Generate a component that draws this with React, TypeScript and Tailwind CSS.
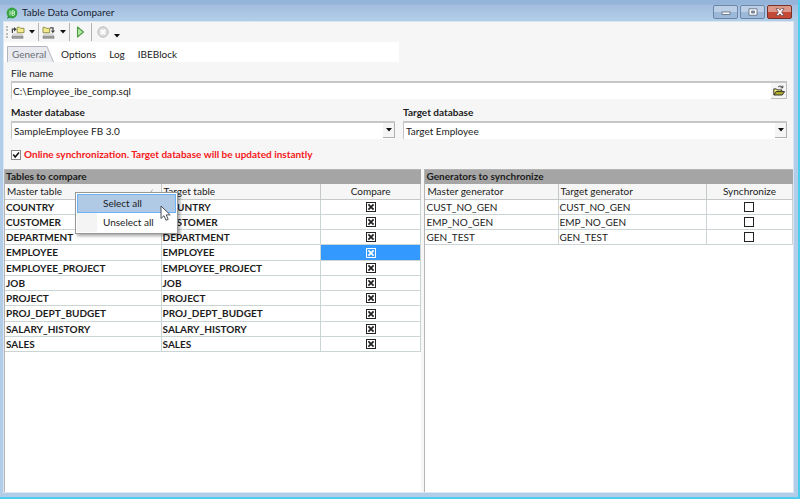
import { useState } from "react";
import type { ReactNode } from "react";
import clsx from "clsx";

const tables = [
    "COUNTRY",
    "CUSTOMER",
    "DEPARTMENT",
    "EMPLOYEE",
    "EMPLOYEE_PROJECT",
    "JOB",
    "PROJECT",
    "PROJ_DEPT_BUDGET",
    "SALARY_HISTORY",
    "SALES",
];

const generators = ["CUST_NO_GEN", "EMP_NO_GEN", "GEN_TEST"];

const tabs = ["Options", "Log", "IBEBlock"];

const CaretDown = ({ className }: { className?: string }) => (
    <svg viewBox="0 0 6 4" className={clsx("w-[6px] h-[4px]", className)} fill="#111" aria-hidden="true">
        <path d="M0 0h6L3 3.5z" />
    </svg>
);

const AppLogo = () => (
    <svg viewBox="0 0 12 12" className="size-3" aria-hidden="true">
        <circle cx="6" cy="6" r="5.4" fill="#35a53f" />
        <path d="M2 9 1 12l3-1.4z" fill="#2b8a35" />
        <path d="M4 3.6v4.8M6 3.8h1.6a1 1 0 0 1 0 2.2H6.2h1.6a1.2 1.2 0 0 1 0 2.3H6z" fill="none" stroke="#d4f5d8" strokeWidth="1" />
    </svg>
);

// disk drive with a folder; `out` flips the arrow so it points down to the drive
const DriveIcon = ({ out = false }: { out?: boolean }) => (
    <svg viewBox="0 0 14 13" className="w-[14px] h-[13px]" aria-hidden="true">
        <path d="M2.5 8h8l1.5 2H1z" fill="#ececec" stroke="#b5b5b5" strokeWidth="0.6" />
        <path d="M1 10.3h11v2H1z" fill="#a0a0a0" stroke="#777" strokeWidth="0.6" />
        {out ? (
            <>
                <path d="M1 1.3h2.2l.8 1h3.6v4.4H1z" fill="#f4ec8c" stroke="#8d8840" strokeWidth="0.9" />
                <path d="M8 1.8h3v3" fill="none" stroke="#444" strokeWidth="1.2" />
                <path d="M8.8 4.6H13l-2.1 2.6z" fill="#444" />
            </>
        ) : (
            <>
                <path d="M6.2 1.3h2.4l.8 1H13v4.4H6.2z" fill="#f4ec8c" stroke="#8d8840" strokeWidth="0.9" />
                <path d="M1.4 7V3.2h2" fill="none" stroke="#444" strokeWidth="1.2" />
                <path d="M3 .9l2.7 2.3L3 5.5z" fill="#444" />
            </>
        )}
    </svg>
);

const FolderOpenIcon = () => (
    <svg viewBox="0 0 12 11" className="w-3 h-[11px]" aria-hidden="true">
        <path d="M5 2.2C6 .8 8 .6 9.4 2.2M9.8.6v2.2H7.6" fill="none" stroke="#333" strokeWidth="0.9" />
        <path d="M.8 9.8V3.9h2.6l.8 1h4.6v1.6" fill="#f3ec7a" stroke="#222" strokeWidth="0.9" />
        <path d="M.9 10 3 6.6h8.6L9.2 10z" fill="#b5b130" stroke="#222" strokeWidth="0.9" />
    </svg>
);

const TitleBar = () => (
    <header className="flex h-[21px] shrink-0 items-start justify-between bg-linear-to-b from-[#94b4d9] from-20% via-[#a4bddf] via-25% to-[#b0cde8] to-90% px-[6px]">
        <div className="flex items-center gap-1 pt-[5px]">
            <AppLogo />
            <h1 className="leading-[15px] text-[#1a2433]">Table Data Comparer</h1>
        </div>
        <div className="flex gap-[2px] pt-[5px]">
            <button aria-label="Minimize" className="flex h-[14px] w-[25px] items-center justify-center rounded-[2px] border border-[#6b86a8] bg-linear-to-b from-[#bccfe6] from-50% to-[#9db9da] to-50%">
                <svg viewBox="0 0 10 8" className="h-2 w-2.5"><rect x="1" y="4" width="8" height="2.5" fill="#fff" stroke="#596678" strokeWidth="0.8" /></svg>
            </button>
            <button aria-label="Maximize" className="flex h-[14px] w-[25px] items-center justify-center rounded-[2px] border border-[#6b86a8] bg-linear-to-b from-[#bccfe6] from-50% to-[#9db9da] to-50%">
                <svg viewBox="0 0 10 8" className="h-2 w-2.5"><path d="M1 .8h8v6.4H1z" fill="#fff" stroke="#596678" strokeWidth="0.8" /><path d="M3.6 3h2.8v2H3.6z" fill="#8ea7c6" stroke="#596678" strokeWidth="0.8" /></svg>
            </button>
            <button aria-label="Close" className="flex h-[14px] w-[25px] items-center justify-center rounded-[2px] border border-[#7a3029] bg-linear-to-b from-[#dd9788] from-50% to-[#c44a36] to-50%">
                <svg viewBox="0 0 10 8" className="h-2 w-2.5"><path d="M1 .6h2.6L5 2.2 6.4.6H9L6.6 4 9 7.4H6.4L5 5.8 3.6 7.4H1L3.4 4z" fill="#fff" stroke="#6a4a4a" strokeWidth="0.8" /></svg>
            </button>
        </div>
    </header>
);

const Divider = () => <span className="h-[18px] w-px bg-[#b4b4b4]" />;

const Toolbar = () => (
    <div className="flex h-5 items-center pl-[2px]">
        <span className="h-3 border-l-2 border-dotted border-[#bdbdbd]" />
        <button aria-label="Load configuration" className="flex items-center gap-1 px-[3px]">
            <DriveIcon />
            <CaretDown />
        </button>
        <Divider />
        <button aria-label="Save configuration" className="flex items-center gap-1 pr-[3px] pl-[3px]">
            <DriveIcon out />
            <CaretDown />
        </button>
        <Divider />
        <button aria-label="Run" className="flex w-[21px] justify-center">
            <svg viewBox="0 0 9 12" className="h-3 w-[9px]"><path d="M1.5 1v10l6-5z" fill="#b4e8a0" stroke="#4f9a45" strokeWidth="1.1" strokeLinejoin="round" /></svg>
        </button>
        <Divider />
        <button aria-label="Stop" disabled className="flex w-[21px] justify-center">
            <svg viewBox="0 0 12 12" className="size-3"><circle cx="6" cy="6" r="5.2" fill="#dedede" stroke="#bcbcbc" /><path d="m4 4 4 4m0-4-4 4" stroke="#fff" strokeWidth="2" /></svg>
        </button>
        <button aria-label="More" className="px-px pt-2">
            <CaretDown />
        </button>
    </div>
);

const TabStrip = () => (
    <nav role="tablist" className="flex h-5 w-1/2 items-end bg-white pl-[3px]">
        <button role="tab" aria-selected="true" className="relative h-4 w-[47px] text-left text-[#6c7076]">
            <svg viewBox="0 0 47 16" preserveAspectRatio="none" className="absolute inset-0 size-full" aria-hidden="true">
                <path d="M.5 16V.5h39.5L46.5 16" fill="#e9ebf1" stroke="#b3b6bc" />
            </svg>
            <span className="relative pl-[5px]">General</span>
        </button>
        <div className="flex h-4 items-center gap-[13px] pl-[7px]">
            {tabs.map((tab) => (
                <button key={tab} role="tab" aria-selected="false">{tab}</button>
            ))}
        </div>
    </nav>
);

const DatabaseSelect = ({ id, label, value }: { id: string; label: string; value: string }) => (
    <div className="flex min-w-0 flex-1 flex-col gap-[2px]">
        <label htmlFor={id} className="font-bold">{label}</label>
        <div className="relative">
            <select id={id} className="block h-[18px] w-full appearance-none border-t-2 border-l border-[#c6c6c6] bg-white pl-[2px] outline-none">
                <option>{value}</option>
            </select>
            <span className="pointer-events-none absolute top-[2px] right-0 flex h-[15px] w-3 items-center justify-center border-r border-b border-[#b0b0b0] bg-[#f5f5f5]">
                <CaretDown />
            </span>
        </div>
    </div>
);

const CellCheck = ({ label, checked, selected = false }: { label: string; checked: boolean; selected?: boolean }) => {
    const [on, setOn] = useState(checked);
    return (
        <label className={clsx("relative mx-auto block size-[10px]", selected ? "text-white" : "text-[#222]")}>
            <input
                type="checkbox"
                aria-label={label}
                checked={on}
                onChange={() => setOn(!on)}
                className="block size-[10px] appearance-none border border-current"
            />
            {on && (
                <svg viewBox="0 0 10 10" className="pointer-events-none absolute inset-0 size-full" aria-hidden="true">
                    <path d="m2.4 2.4 5.2 5.2m0-5.2L2.4 7.6" stroke="currentColor" strokeWidth="1.8" />
                </svg>
            )}
        </label>
    );
};

type GridProps = {
    title: string;
    columns: [string, string, string];
    widths: [string, string, string];
    rows: string[];
    checked?: boolean;
    selected?: string;
    bold?: boolean;
    sorted?: boolean;
    className?: string;
    children?: ReactNode;
};

const GridPanel = ({ title, columns, widths, rows, checked = false, selected, bold, sorted, className, children }: GridProps) => (
    <section className={clsx("relative min-w-0 border-t border-l border-[#b5b5b5] bg-white", className)}>
        <h2 className="h-[14px] bg-[#a5a5a5] pl-px leading-[13px] font-bold">{title}</h2>
        <table className="w-full table-fixed border-separate border-spacing-0">
            <thead className="bg-[#f6f6f6]">
                <tr className="h-4">
                    {columns.map((column, i) => (
                        <th
                            key={column}
                            className={clsx("border-r border-b border-[#c4c8c8] p-0 font-normal", widths[i], i < 2 ? "pl-[2px] text-left" : "text-center")}
                        >
                            <span className="flex items-center">
                                <span className={clsx(i === 2 && "w-full")}>{column}</span>
                                {sorted && i === 0 && (
                                    <svg viewBox="0 0 7 6" className="mr-[5px] ml-auto h-1.5 w-[7px]" aria-hidden="true"><path d="M.5 5.5 3.5.5" stroke="#aaa" /></svg>
                                )}
                            </span>
                        </th>
                    ))}
                </tr>
            </thead>
            <tbody>
                {rows.map((row) => (
                    <tr key={row} className="h-[15px] nth-[4n]:h-4">
                        <td className={clsx("border-r border-b border-[#ccd5d5] p-0 pl-px", bold && "font-bold")}>{row}</td>
                        <td className={clsx("border-r border-b border-[#ccd5d5] p-0 pl-px", bold && "font-bold")}>{row}</td>
                        <td className={clsx("border-r border-b border-[#ccd5d5] p-0", row === selected && "bg-[#3399ff]")}>
                            <CellCheck label={`${columns[2]} ${row}`} checked={checked} selected={row === selected} />
                        </td>
                    </tr>
                ))}
            </tbody>
        </table>
        {children}
    </section>
);

const ContextMenu = () => (
    <div role="menu" className="absolute top-[22px] left-[70px] w-[103px] border border-[#979797] bg-white p-px shadow-[2px_2px_3px_rgba(0,0,0,0.35)]">
        <button role="menuitem" className="block h-[19px] w-full border border-[#6bb3f5] bg-[#b0cae6] pl-[25px] text-left">Select all</button>
        <button role="menuitem" className="block h-[19px] w-full border-l-[20px] border-[#f4f4f4] pl-[6px] text-left">Unselect all</button>
        <svg viewBox="0 0 12 17" className="absolute top-3 left-[84px] h-[17px] w-3" aria-hidden="true">
            <path d="M1 1v12.5l3-2.8 2 4.6 2.2-1-2-4.4h4z" fill="#fff" stroke="#4a4f58" />
        </svg>
    </div>
);

const App = () => {
    const [fileName, setFileName] = useState("C:\\Employee_ibe_comp.sql");
    const [online, setOnline] = useState(true);

    return (
        <div className="flex min-h-screen flex-col border-r-2 border-b-2 border-[#4fcdf0] bg-[#b2cde8] font-['Lato','Carlito',sans-serif] text-[10px] leading-[13px] text-[#1c1c1c]">
            <TitleBar />
            <main className="mr-[4px] mb-[4px] ml-[3px] flex grow flex-col border border-[#dbe6f2] bg-[#f6f6f6]">
                <Toolbar />
                <TabStrip />

                <form className="flex flex-col pt-[5px] pr-[6px] pb-2 pl-[7px]" onSubmit={(e) => e.preventDefault()}>
                    <label htmlFor="file-name">File name</label>
                    <div className="mt-[1px] flex h-[18px] border-t-2 border-l border-[#c6c6c6] bg-white">
                        <input
                            id="file-name"
                            value={fileName}
                            onChange={(e) => setFileName(e.target.value)}
                            className="min-w-0 grow pl-px outline-none"
                        />
                        <button aria-label="Browse" className="flex w-4 items-center justify-center border-r border-b border-[#bdbdbd] bg-[#f5f5f5]">
                            <FolderOpenIcon />
                        </button>
                    </div>

                    <div className="mt-[7px] flex gap-2">
                        <DatabaseSelect id="master-db" label="Master database" value="SampleEmployee FB 3.0" />
                        <DatabaseSelect id="target-db" label="Target database" value="Target Employee" />
                    </div>

                    <label className="mt-[9px] flex items-center gap-[3px] font-bold text-[#f5191c]">
                        <span className="relative block size-[10px]">
                            <input
                                type="checkbox"
                                checked={online}
                                onChange={() => setOnline(!online)}
                                className="block size-[10px] appearance-none border border-[#8a8a8a] bg-white"
                            />
                            {online && (
                                <svg viewBox="0 0 10 10" className="pointer-events-none absolute inset-0 size-full" aria-hidden="true">
                                    <path d="M2.2 4.6 4.2 7 8 2.6" fill="none" stroke="#111" strokeWidth="1.5" />
                                </svg>
                            )}
                        </span>
                        Online synchronization. Target database will be updated instantly
                    </label>
                </form>

                <div className="flex grow gap-[3px]">
                    <GridPanel
                        className="flex-[417]"
                        title="Tables to compare"
                        columns={["Master table", "Target table", "Compare"]}
                        widths={["w-[37.6%]", "w-[38.2%]", "w-[24.2%]"]}
                        rows={tables}
                        selected="EMPLOYEE"
                        checked
                        bold
                        sorted
                    >
                        <ContextMenu />
                    </GridPanel>
                    <GridPanel
                        className="flex-[368]"
                        title="Generators to synchronize"
                        columns={["Master generator", "Target generator", "Synchronize"]}
                        widths={["w-[36.2%]", "w-[40.4%]", "w-[23.4%]"]}
                        rows={generators}
                    />
                </div>
            </main>
        </div>
    );
};

export default App;
